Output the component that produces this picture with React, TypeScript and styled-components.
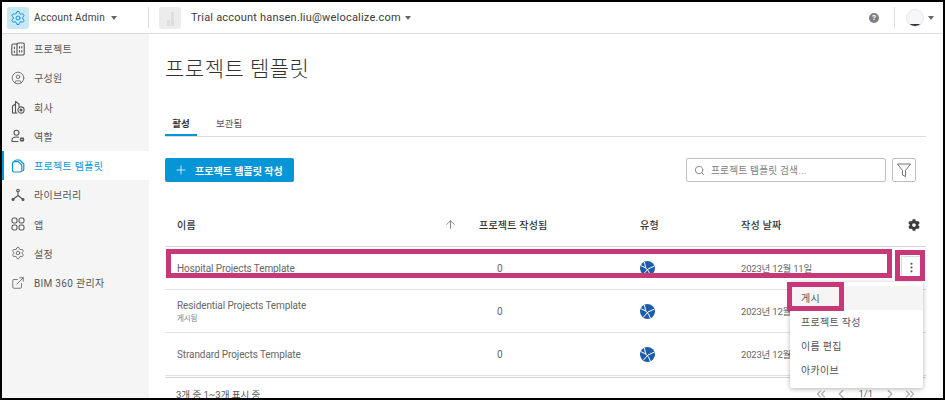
import React from "react";
import styled, { createGlobalStyle } from "styled-components";
import { ArrowUp, ChevronLeft, ChevronRight, ChevronsLeft, ChevronsRight, CircleUser, EllipsisVertical, ExternalLink, Plus, Search, Settings } from "lucide-react";
import { FaCog } from "react-icons/fa";

const FONT = `"Roboto", "Noto Sans CJK KR", sans-serif`;

const GlobalStyle = createGlobalStyle`
  html, body {
    margin: 0;
    padding: 0;
    background: #000;
    font-family: ${FONT};
    overflow: hidden;
  }
`;

const Shell = styled.div`
  width: 941px;
  height: 396px;
  margin: 2px 0 0 2px;
  background: #fff;
  display: flex;
  flex-direction: column;
  overflow: hidden;
  position: relative;
`;

const TopBar = styled.header`
  height: 31px;
  flex: none;
  display: flex;
  align-items: center;
  border-bottom: 1px solid #dcdcdc;
  padding-left: 5px;
`;

const AppBadge = styled.div`
  width: 22px;
  height: 22px;
  border-radius: 3px;
  background: #c9e8f6;
  color: #0a8fd3;
  display: flex;
  align-items: center;
  justify-content: center;
`;

const BarLabel = styled.span<{ $small?: boolean }>`
  font-size: ${({ $small }) => ($small ? "10px" : "11px")};
  color: #3c3c3c;
  letter-spacing: 0.2px;
  white-space: nowrap;
`;

const Caret = styled.i<{ $left: number }>`
  display: block;
  margin-left: ${({ $left }) => $left}px;
  border-left: 3.5px solid transparent;
  border-right: 3.5px solid transparent;
  border-top: 4px solid #666;
`;

const AccountSwitch = styled.div`
  display: flex;
  align-items: center;
  width: 141px;
  gap: 5px;
`;

const Divider = styled.div`
  width: 1px;
  height: 21px;
  background: #dcdcdc;
`;

const ProjectThumb = styled.div`
  width: 22px;
  height: 22px;
  margin: 0 10px;
  border-radius: 3px;
  background: #ececec;
  display: flex;
  align-items: flex-end;
  justify-content: center;
  gap: 1px;
  padding-bottom: 3px;
  box-sizing: border-box;
`;

const ThumbBar = styled.span<{ $h: number }>`
  width: 3px;
  height: ${({ $h }) => $h}px;
  background: #dedede;
`;

const BarRight = styled.div`
  margin-left: auto;
  display: flex;
  align-items: center;
  padding-right: 9px;
`;

const HelpDot = styled.div`
  width: 10px;
  height: 10px;
  border-radius: 50%;
  background: #808080;
  color: #fff;
  font-size: 8px;
  font-weight: 700;
  line-height: 10px;
  text-align: center;
  margin-right: 15px;
`;

const Avatar = styled.div`
  width: 16px;
  height: 16px;
  margin: 0 4px 0 11px;
  border-radius: 50%;
  background: linear-gradient(#f7f6fb 90%, #333 90%);
  border: 1px solid #e6e6e6;
`;

const Body = styled.div`
  flex: 1;
  display: flex;
  min-height: 0;
`;

const Sidebar = styled.nav`
  width: 147px;
  flex: none;
  background: #f5f5f5;
`;

const NavItem = styled.div<{ $active?: boolean }>`
  height: 29.25px;
  display: flex;
  align-items: center;
  gap: 9px;
  padding-left: 9px;
  box-sizing: border-box;
  font-size: 10px;
  letter-spacing: 0.3px;
  color: ${({ $active }) => ($active ? "#0696d7" : "#555")};
  background: ${({ $active }) => ($active ? "#fff" : "transparent")};
  box-shadow: ${({ $active }) => ($active ? "inset 2px 0 0 #0696d7" : "none")};
  svg {
    flex: none;
    width: 14px;
    height: 14px;
  }
`;

const Main = styled.main`
  flex: 1;
  padding: 0 17px 0 16px;
  position: relative;
  min-width: 0;
`;

const Title = styled.h1`
  margin: 20px 0 0;
  height: 30px;
  font-size: 21px;
  line-height: 30px;
  font-weight: 300;
  color: #333;
  letter-spacing: 0.5px;
`;

const Tabs = styled.div`
  display: flex;
  margin-top: 29px;
  height: 23px;
  border-bottom: 1px solid #dcdcdc;
`;

const Tab = styled.div<{ $active?: boolean }>`
  width: ${({ $active }) => ($active ? "32px" : "auto")};
  margin-left: ${({ $active }) => ($active ? "0" : "19px")};
  text-align: center;
  font-size: 9.5px;
  line-height: 22px;
  font-weight: ${({ $active }) => ($active ? 700 : 400)};
  color: ${({ $active }) => ($active ? "#333" : "#555")};
  height: 23px;
  box-sizing: border-box;
  border-bottom: ${({ $active }) => ($active ? "2px solid #0696d7" : "none")};
`;

const Toolbar = styled.div`
  display: flex;
  align-items: center;
  margin-top: 21px;
  height: 24px;
  gap: 6px;
`;

const CreateButton = styled.button`
  width: 129px;
  height: 24px;
  border: 0;
  border-radius: 2px;
  background: #0696d7;
  color: #fff;
  font-family: ${FONT};
  font-size: 10px;
  font-weight: 700;
  display: flex;
  align-items: center;
  gap: 7px;
  padding: 0 0 0 9px;
  margin-right: auto;
`;

const SearchBox = styled.div`
  width: 200px;
  height: 24px;
  box-sizing: border-box;
  border: 1px solid #bfbfbf;
  border-radius: 2px;
  display: flex;
  align-items: center;
  gap: 6px;
  padding-left: 7px;
  color: #808080;
  font-size: 9.7px;
  letter-spacing: 0.2px;
`;

const FilterButton = styled.div`
  width: 24px;
  height: 24px;
  box-sizing: border-box;
  border: 1px solid #bfbfbf;
  border-radius: 2px;
  display: flex;
  align-items: center;
  justify-content: center;
  margin-right: 10px;
`;

const Table = styled.div`
  margin-top: 21px;
`;

const RowGrid = styled.div`
  display: grid;
  grid-template-columns: 12px 267px 35px 161px 101px 160px 1fr;
  align-items: center;
  border-bottom: 1px solid #e2e2e2;
`;

const HeadRow = styled(RowGrid)`
  height: 43px;
  font-size: 10px;
  font-weight: 500;
  color: #333;
  letter-spacing: 0.2px;
  border-bottom: 1px solid #d4d4d4;
`;

const DataRow = styled(RowGrid)`
  height: 42px;
  font-size: 9.5px;
  color: #666;
  letter-spacing: -0.2px;
`;

const SortIcon = styled.div`
  color: #555;
  display: flex;
`;

const GearCell = styled.div`
  color: #3c3c3c;
  display: flex;
  justify-content: center;
`;

const NameCell = styled.div`
  grid-column: 2 / 4;
  font-size: 10px;
  letter-spacing: -0.1px;
`;

const Sub = styled.div`
  font-size: 7.5px;
  color: #808080;
  margin-top: 1px;
`;

const CountCell = styled.div`
  padding-left: 18px;
  font-size: 10px;
`;

const GlobeCell = styled.div`
  display: flex;
`;

const Footer = styled.div`
  border-top: 1px solid #d4d4d4;
  margin-top: 1px;
  height: 31px;
  display: flex;
  align-items: center;
  justify-content: space-between;
  padding: 0 9px 0 11px;
  font-size: 9.5px;
  color: #555;
`;

const Pager = styled.div`
  display: flex;
  align-items: center;
  gap: 6px;
  color: #aaa;
  svg {
    width: 14px;
    height: 14px;
  }
`;

const PageText = styled.span`
  color: #666;
  margin: 0 4px;
`;

const DotsButton = styled.div`
  width: 20px;
  height: 22px;
  box-sizing: border-box;
  border: 1px solid #bfe3f3;
  position: absolute;
  left: 752px;
  top: 222px;
  color: #555;
  display: flex;
  align-items: center;
  justify-content: center;
`;

const Menu = styled.div`
  position: absolute;
  left: 641px;
  top: 248px;
  width: 133px;
  height: 106px;
  background: #fff;
  border-radius: 2px;
  box-shadow: 0 1px 5px rgba(0, 0, 0, 0.3);
  padding-top: 4px;
  box-sizing: border-box;
`;

const MenuItem = styled.div<{ $active?: boolean }>`
  height: 24px;
  line-height: 26px;
  padding-left: 11px;
  font-size: 10px;
  letter-spacing: 0.3px;
  color: #555;
  background: ${({ $active }) => ($active ? "#f5f5f5" : "transparent")};
`;

const Marker = styled.div<{ $x: number; $y: number; $w: number; $h: number }>`
  position: absolute;
  left: ${({ $x }) => $x}px;
  top: ${({ $y }) => $y}px;
  width: ${({ $w }) => $w}px;
  height: ${({ $h }) => $h}px;
  box-sizing: border-box;
  border: 5px solid #c83778;
  pointer-events: none;
`;

const Globe = () => (
  <svg width="15" height="15" viewBox="0 0 15 15">
    <circle cx="7.5" cy="7.5" r="7.5" fill="#1c5cab" />
    <path d="M.8 4.6 5.800 7Q9 9.500 10.500 14.500M5.800 7Q5 4 4.400 1M3.500 13Q7 7 14.500 5" fill="none" stroke="#fff" strokeWidth="1" />
  </svg>
);

const stroke = { fill: "none", stroke: "#555", strokeWidth: 1.1, strokeLinecap: "round", strokeLinejoin: "round" } as const;

const BuildingIcon = () => (
  <svg viewBox="0 0 14 14" {...stroke}>
    <path d="M6 13H2a1.200 1.200 0 0 1-1.200-1.200V3.500A1.500 1.500 0 0 1 2.300 2H6z" />
    <path d="M6 2.500A1.500 1.500 0 0 1 7.500 1H12a1.200 1.200 0 0 1 1.200 1.200v9.600A1.200 1.200 0 0 1 12 13H6" />
    <path d="M3.400 5v1.500M3.400 9v1.500M8.500 4.500V6M10.800 4.500V6M8.500 8.500V10M10.800 8.500V10" />
  </svg>
);

const CompanyIcon = () => (
  <svg viewBox="0 0 14 14" {...stroke}>
    <path d="M6 13H1.500V6L4.500 4V1.500L8 4V6.500M4.500 13V4" />
    <circle cx="10" cy="10" r="3.100" />
    <circle cx="10" cy="10" r="1" fill="#555" />
  </svg>
);

const RoleIcon = () => (
  <svg viewBox="0 0 14 14" {...stroke}>
    <circle cx="5.500" cy="3.800" r="2.500" />
    <path d="M1 12.500V11c0-1.800 2-3 4.500-3 .8 0 1.500.1 2.100.3M1 12.500h6" />
    <circle cx="11" cy="10.500" r="1.500" strokeWidth="1.700" />
  </svg>
);

const TemplateIcon = () => (
  <svg viewBox="0 0 14 14" fill="none" stroke="#0696d7" strokeWidth="1.200" strokeLinejoin="round">
    <path d="M3.500 2.500A1.800 1.800 0 0 1 5.300 1h3.500l4 4v5.200a1.800 1.800 0 0 1-1.500 1.800" />
    <path d="M1.500 4.500a1.800 1.800 0 0 1 1.800-1.800h4l3.500 3.500v5a1.800 1.800 0 0 1-1.800 1.800H3.300a1.800 1.800 0 0 1-1.800-1.800z" />
  </svg>
);

const LibraryIcon = () => (
  <svg viewBox="0 0 14 14" {...stroke}>
    <circle cx="7" cy="2.500" r="1.300" />
    <path d="M7 3.800V7.500L2.500 11M7 7.500 11.500 11" />
    <circle cx="2" cy="11.500" r="1" fill="#555" />
    <circle cx="12" cy="11.500" r="1" fill="#555" />
  </svg>
);

const AppsIcon = () => (
  <svg viewBox="0 0 14 14" {...stroke}>
    <rect x="1" y="1" width="5" height="5" rx="1.800" />
    <rect x="8" y="1" width="5" height="5" rx="1.800" />
    <rect x="1" y="8" width="5" height="5" rx="1.800" />
    <rect x="8" y="8" width="5" height="5" rx="1.800" />
  </svg>
);

const FunnelIcon = () => (
  <svg width="16" height="16" viewBox="0 0 16 16" fill="none" stroke="#666" strokeWidth="0.9" strokeLinejoin="round">
    <path d="M1.500 2h13L9.500 8.500v6L6.500 13V8.500z" />
  </svg>
);

const navItems = [
  { label: "프로젝트", icon: <BuildingIcon /> },
  { label: "구성원", icon: <CircleUser strokeWidth={1.3} color="#555" /> },
  { label: "회사", icon: <CompanyIcon /> },
  { label: "역할", icon: <RoleIcon /> },
  { label: "프로젝트 템플릿", icon: <TemplateIcon />, active: true },
  { label: "라이브러리", icon: <LibraryIcon /> },
  { label: "앱", icon: <AppsIcon /> },
  { label: "설정", icon: <Settings strokeWidth={1.3} color="#555" /> },
  { label: "BIM 360 관리자", icon: <ExternalLink strokeWidth={1.3} color="#555" /> },
];

const rows = [
  { name: "Hospital Projects Template", date: "2023년 12월 11일" },
  { name: "Residential Projects Template", sub: "게시됨", date: "2023년 12월 11일" },
  { name: "Strandard Projects Template", date: "2023년 12월 11일" },
];

const App = () => {
  return (
    <>
      <GlobalStyle />
      <Shell>
        <TopBar>
          <AccountSwitch>
            <AppBadge>
              <Settings size={16} strokeWidth={1.4} />
            </AppBadge>
            <BarLabel $small>Account Admin</BarLabel>
            <Caret $left={1} />
          </AccountSwitch>
          <Divider />
          <ProjectThumb>
            <ThumbBar $h={6} />
            <ThumbBar $h={14} />
          </ProjectThumb>
          <BarLabel>Trial account hansen.liu@welocalize.com</BarLabel>
          <Caret $left={4} />
          <BarRight>
            <HelpDot>?</HelpDot>
            <Divider />
            <Avatar />
            <Caret $left={0} />
          </BarRight>
        </TopBar>
        <Body>
          <Sidebar>
            {navItems.map((item) => (
              <NavItem key={item.label} $active={item.active}>
                {item.icon}
                {item.label}
              </NavItem>
            ))}
          </Sidebar>
          <Main>
            <Title>프로젝트 템플릿</Title>
            <Tabs>
              <Tab $active>활성</Tab>
              <Tab>보관됨</Tab>
            </Tabs>
            <Toolbar>
              <CreateButton>
                <Plus size={14} strokeWidth={1.3} />
                프로젝트 템플릿 작성
              </CreateButton>
              <SearchBox>
                <Search size={11} />
                프로젝트 템플릿 검색...
              </SearchBox>
              <FilterButton>
                <FunnelIcon />
              </FilterButton>
            </Toolbar>
            <Table>
              <HeadRow>
                <span />
                <span>이름</span>
                <SortIcon>
                  <ArrowUp size={13} strokeWidth={1.3} />
                </SortIcon>
                <span>프로젝트 작성됨</span>
                <span>유형</span>
                <span>작성 날짜</span>
                <GearCell>
                  <FaCog size={12} />
                </GearCell>
              </HeadRow>
              {rows.map((row) => (
                <DataRow key={row.name}>
                  <span />
                  <NameCell>
                    {row.name}
                    {row.sub && <Sub>{row.sub}</Sub>}
                  </NameCell>
                  <CountCell>0</CountCell>
                  <GlobeCell>
                    <Globe />
                  </GlobeCell>
                  <span>{row.date}</span>
                </DataRow>
              ))}
              <Footer>
                3개 중 1~3개 표시 중
                <Pager>
                  <ChevronsLeft />
                  <ChevronLeft />
                  <PageText>1/1</PageText>
                  <ChevronRight />
                  <ChevronsRight />
                </Pager>
              </Footer>
            </Table>
            <DotsButton>
              <EllipsisVertical size={13} />
            </DotsButton>
            <Menu>
              <MenuItem $active>게시</MenuItem>
              <MenuItem>프로젝트 작성</MenuItem>
              <MenuItem>이름 편집</MenuItem>
              <MenuItem>아카이브</MenuItem>
            </Menu>
            <Marker $x={17} $y={215} $w={726} $h={29} />
            <Marker $x={746} $y={216} $w={30} $h={31} />
            <Marker $x={638} $y={248} $w={57} $h={29} />
          </Main>
        </Body>
      </Shell>
    </>
  );
};

export default App;
